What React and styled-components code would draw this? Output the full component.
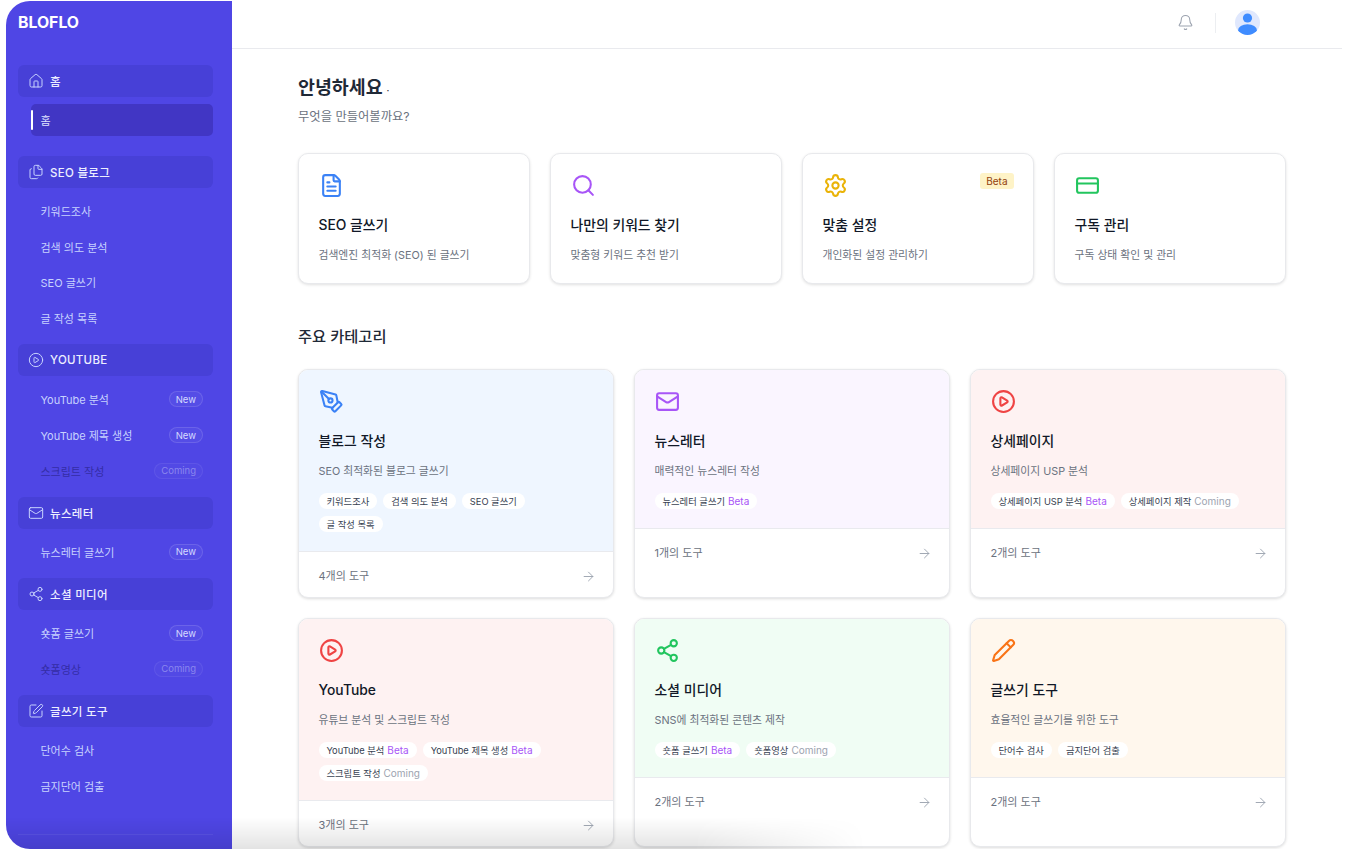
import React from "react";
import styled, { createGlobalStyle } from "styled-components";
import {
  House, Files, CirclePlay, Mail, Share2, SquarePen, Bell, ArrowRight,
  FileText, Search, Settings, CreditCard, PenTool, Pencil,
} from "lucide-react";

const Global = createGlobalStyle`
  html, body { margin: 0; padding: 0; background: #fff; height: 100%; overflow: hidden; }
  * { box-sizing: border-box; }
  body { font-family: Inter, "Noto Sans CJK KR", sans-serif; }
`;

const Page = styled.div`
  width: 1348px;
  height: 853px;
  padding: 1px 6px 4px 6px;
  background: #fff;
`;
const Frame = styled.div`
  position: relative;
  display: flex;
  height: 100%;
  border-radius: 24px;
  overflow: hidden;
  background: #fff;
`;
const Sidebar = styled.aside`
  width: 226px;
  flex: none;
  background: #4f46e5;
  padding: 0 19px 0 12px;
  display: flex;
  flex-direction: column;
  color: #fff;
`;
const Logo = styled.div`
  font-size: 15.8px;
  font-weight: 700;
  line-height: 20px;
  margin-top: 12px;
  margin-bottom: 32px;
`;
const Group = styled.div`
  margin-bottom: ${(p) => (p.$first ? 20 : 10.25)}px;
`;
const GroupHead = styled.div`
  height: 32px;
  width: 195px;
  border-radius: 6px;
  background: #4740d7;
  display: flex;
  align-items: center;
  gap: 6px;
  padding-left: 10px;
  font-size: 11.5px;
  font-weight: 500;
  letter-spacing: 0.3px;
  color: #eceeff;
  margin-bottom: 7px;
  svg { color: #c7d2fe; flex: none; }
`;
const Items = styled.div`
  display: flex;
  flex-direction: column;
  gap: 3.7px;
  margin-left: 13px;
  width: 182px;
`;
const Item = styled.div`
  position: relative;
  height: 32px;
  border-radius: 5px;
  display: flex;
  align-items: center;
  justify-content: space-between;
  padding: 0 10px 0 9.5px;
  font-size: 11px;
  color: ${(p) => (p.$muted ? "#342da6" : p.$active ? "#dfe3ff" : "#c7d2fe")};
  background: ${(p) => (p.$active ? "#4136c4" : "transparent")};
  ${(p) =>
    p.$active &&
    `&::before { content: ""; position: absolute; left: 0; top: 6px; bottom: 6px; width: 2px; background: #fff; border-radius: 1px; }`}
`;
const Badge = styled.span`
  height: 16px;
  padding: 0 6px;
  border-radius: 8px;
  display: inline-flex;
  align-items: center;
  font-size: 9.5px;
  color: ${(p) => (p.$soon ? "#8a87ee" : "#d5daff")};
  background: rgba(255, 255, 255, ${(p) => (p.$soon ? 0.02 : 0.04)});
  border: 1px solid rgba(255, 255, 255, ${(p) => (p.$soon ? 0.07 : 0.13)});
`;
const SideRule = styled.div`
  margin-top: 22px;
  width: 195px;
  height: 1px;
  background: #5a52e6;
`;

const Main = styled.div`
  flex: 1;
  min-width: 0;
  display: flex;
  flex-direction: column;
`;
const Header = styled.header`
  height: 48px;
  flex: none;
  border-bottom: 1px solid #e9eaee;
  display: flex;
  align-items: center;
  justify-content: flex-end;
  padding-right: 82px;
  padding-bottom: 4px;
`;
const BellWrap = styled.div`
  color: #9ca3af;
  display: flex;
`;
const HeadRule = styled.div`
  width: 1px;
  height: 20px;
  background: #eceef1;
  margin: 0 19px 0 21px;
`;
const Avatar = styled.div`
  width: 25px;
  height: 25px;
  border-radius: 50%;
  background: #e0e8fd;
  overflow: hidden;
  svg { display: block; }
`;
const Content = styled.main`
  flex: 1;
  min-height: 0;
  overflow: hidden;
  padding: 26px 56px 0 66px;
`;
const Hello = styled.h1`
  margin: 0;
  font-size: 18.4px;
  line-height: 24px;
  font-weight: 600;
  color: #1f2937;
  small { font-size: 10px; font-weight: 400; margin-left: 1px; }
`;
const Sub = styled.p`
  margin: 5px 0 0;
  font-size: 12.3px;
  line-height: 20px;
  color: #6b7280;
`;
const QuickRow = styled.div`
  margin-top: 26px;
  display: grid;
  grid-template-columns: repeat(4, 232px);
  gap: 20px;
`;
const QuickCard = styled.div`
  position: relative;
  height: 131px;
  border: 1px solid #e8e9ec;
  border-radius: 10px;
  background: #fff;
  box-shadow: 0 1px 3px rgba(0, 0, 0, 0.12);
  padding: 19px 20px 0 19.5px;
`;
const IconBox = styled.div`
  height: 24px;
  color: ${(p) => p.$c};
  svg { display: block; }
`;
const CardTitle = styled.h3`
  margin: 16px 0 0;
  font-size: 13.85px;
  line-height: 24px;
  font-weight: 500;
  color: #111827;
`;
const CardDesc = styled.p`
  margin: 11px 0 0;
  font-size: 10.8px;
  line-height: 16px;
  color: #6b7280;
`;
const BetaTag = styled.span`
  position: absolute;
  top: 19px;
  right: 19px;
  height: 16px;
  padding: 0 6.5px;
  display: flex;
  align-items: center;
  border-radius: 3px;
  background: #fef3c7;
  color: #92400e;
  font-size: 10px;
`;
const SectionTitle = styled.h2`
  margin: 42px 0 0;
  font-size: 15.3px;
  line-height: 22px;
  font-weight: 500;
  color: #1f2937;
`;
const CatGrid = styled.div`
  margin-top: 21px;
  display: grid;
  grid-template-columns: repeat(3, 316px);
  grid-auto-rows: 229px;
  gap: 20px;
`;
const CatCard = styled.div`
  border: 1px solid #e8e9ec;
  border-radius: 10px;
  overflow: hidden;
  background: #fff;
  box-shadow: 0 1px 3px rgba(0, 0, 0, 0.14);
  display: flex;
  flex-direction: column;
`;
const CatHead = styled.div`
  background: ${(p) => p.$bg};
  padding: 19px 20px 19px 19.5px;
  border-bottom: 1px solid #e9eaee;
`;
const Tags = styled.div`
  margin-top: 13px;
  display: flex;
  flex-wrap: wrap;
  gap: 7px 6px;
`;
const Tag = styled.span`
  height: 16px;
  padding: 0 8px;
  border-radius: 8px;
  background: #fff;
  display: inline-flex;
  align-items: center;
  gap: 3px;
  font-size: 9.3px;
  color: #374151;
`;
const TagNote = styled.span`
  font-size: 10px;
  color: ${(p) => (p.$soon ? "#9ca3af" : "#a855f7")};
`;
const CatFoot = styled.div`
  padding: 14px 17px 13px 19.5px;
  display: flex;
  align-items: center;
  justify-content: space-between;
  font-size: 11px;
  line-height: 20px;
  color: #6b7280;
  svg { color: #9ca3af; }
`;
const Fade = styled.div`
  position: absolute;
  left: 0;
  bottom: 0;
  width: 860px;
  height: 32px;
  background: linear-gradient(to bottom, rgba(0, 0, 0, 0), rgba(0, 0, 0, 0.11));
  -webkit-mask-image: linear-gradient(to right, #000 80%, transparent);
  mask-image: linear-gradient(to right, #000 80%, transparent);
  pointer-events: none;
`;

const nav = [
  { icon: House, title: "홈", first: true, items: [{ t: "홈", active: true }] },
  { icon: Files, title: "SEO 블로그", items: [{ t: "키워드조사" }, { t: "검색 의도 분석" }, { t: "SEO 글쓰기" }, { t: "글 작성 목록" }] },
  { icon: CirclePlay, title: "YOUTUBE", items: [{ t: "YouTube 분석", b: "New" }, { t: "YouTube 제목 생성", b: "New" }, { t: "스크립트 작성", b: "Coming" }] },
  { icon: Mail, title: "뉴스레터", items: [{ t: "뉴스레터 글쓰기", b: "New" }] },
  { icon: Share2, title: "소셜 미디어", items: [{ t: "숏폼 글쓰기", b: "New" }, { t: "숏폼영상", b: "Coming" }] },
  { icon: SquarePen, title: "글쓰기 도구", items: [{ t: "단어수 검사" }, { t: "금지단어 검출" }] },
];
const quick = [
  { icon: FileText, c: "#3b82f6", t: "SEO 글쓰기", d: "검색엔진 최적화 (SEO) 된 글쓰기" },
  { icon: Search, c: "#a855f7", t: "나만의 키워드 찾기", d: "맞춤형 키워드 추천 받기" },
  { icon: Settings, c: "#eab308", t: "맞춤 설정", d: "개인화된 설정 관리하기", beta: true },
  { icon: CreditCard, c: "#22c55e", t: "구독 관리", d: "구독 상태 확인 및 관리" },
];
const cats = [
  { icon: PenTool, c: "#3b82f6", bg: "#eff6ff", t: "블로그 작성", d: "SEO 최적화된 블로그 글쓰기", n: 4, tags: [["키워드조사"], ["검색 의도 분석"], ["SEO 글쓰기"], ["글 작성 목록"]] },
  { icon: Mail, c: "#a855f7", bg: "#faf5ff", t: "뉴스레터", d: "매력적인 뉴스레터 작성", n: 1, tags: [["뉴스레터 글쓰기", "Beta"]] },
  { icon: CirclePlay, c: "#ef4444", bg: "#fef2f2", t: "상세페이지", d: "상세페이지 USP 분석", n: 2, tags: [["상세페이지 USP 분석", "Beta"], ["상세페이지 제작", "Coming"]] },
  { icon: CirclePlay, c: "#ef4444", bg: "#fef2f2", t: "YouTube", d: "유튜브 분석 및 스크립트 작성", n: 3, tags: [["YouTube 분석", "Beta"], ["YouTube 제목 생성", "Beta"], ["스크립트 작성", "Coming"]] },
  { icon: Share2, c: "#22c55e", bg: "#f0fdf4", t: "소셜 미디어", d: "SNS에 최적화된 콘텐츠 제작", n: 2, tags: [["숏폼 글쓰기", "Beta"], ["숏폼영상", "Coming"]] },
  { icon: Pencil, c: "#f97316", bg: "#fff7ed", t: "글쓰기 도구", d: "효율적인 글쓰기를 위한 도구", n: 2, tags: [["단어수 검사"], ["금지단어 검출"]] },
];

export default function App() {
  return (
    <Page>
      <Global />
      <Frame>
        <Sidebar>
          <Logo>BLOFLO</Logo>
          {nav.map((g) => (
            <Group key={g.title} $first={g.first}>
              <GroupHead>
                <g.icon size={16} strokeWidth={1.5} />
                {g.title}
              </GroupHead>
              <Items>
                {g.items.map((i) => (
                  <Item key={i.t} $active={i.active} $muted={i.b === "Coming"}>
                    {i.t}
                    {i.b && <Badge $soon={i.b === "Coming"}>{i.b}</Badge>}
                  </Item>
                ))}
              </Items>
            </Group>
          ))}
          <SideRule />
        </Sidebar>
        <Main>
          <Header>
            <BellWrap><Bell size={17} strokeWidth={1.5} /></BellWrap>
            <HeadRule />
            <Avatar>
              <svg width="25" height="25" viewBox="0 0 25 25">
                <circle cx="12.5" cy="8" r="4.6" fill="#3f8cff" />
                <ellipse cx="12.5" cy="20.5" rx="9.5" ry="6.2" fill="#3f8cff" />
              </svg>
            </Avatar>
          </Header>
          <Content>
            <Hello>안녕하세요<small> ·</small></Hello>
            <Sub>무엇을 만들어볼까요?</Sub>
            <QuickRow>
              {quick.map((q) => (
                <QuickCard key={q.t}>
                  <IconBox $c={q.c}><q.icon size={25} strokeWidth={2} /></IconBox>
                  {q.beta && <BetaTag>Beta</BetaTag>}
                  <CardTitle>{q.t}</CardTitle>
                  <CardDesc>{q.d}</CardDesc>
                </QuickCard>
              ))}
            </QuickRow>
            <SectionTitle>주요 카테고리</SectionTitle>
            <CatGrid>
              {cats.map((c) => (
                <CatCard key={c.t}>
                  <CatHead $bg={c.bg}>
                    <IconBox $c={c.c}><c.icon size={25} strokeWidth={2} /></IconBox>
                    <CardTitle>{c.t}</CardTitle>
                    <CardDesc>{c.d}</CardDesc>
                    <Tags>
                      {c.tags.map(([t, note]) => (
                        <Tag key={t}>
                          {t}
                          {note && <TagNote $soon={note === "Coming"}>{note}</TagNote>}
                        </Tag>
                      ))}
                    </Tags>
                  </CatHead>
                  <CatFoot>
                    {c.n}개의 도구
                    <ArrowRight size={15} strokeWidth={1.5} />
                  </CatFoot>
                </CatCard>
              ))}
            </CatGrid>
          </Content>
        </Main>
        <Fade />
      </Frame>
    </Page>
  );
}
